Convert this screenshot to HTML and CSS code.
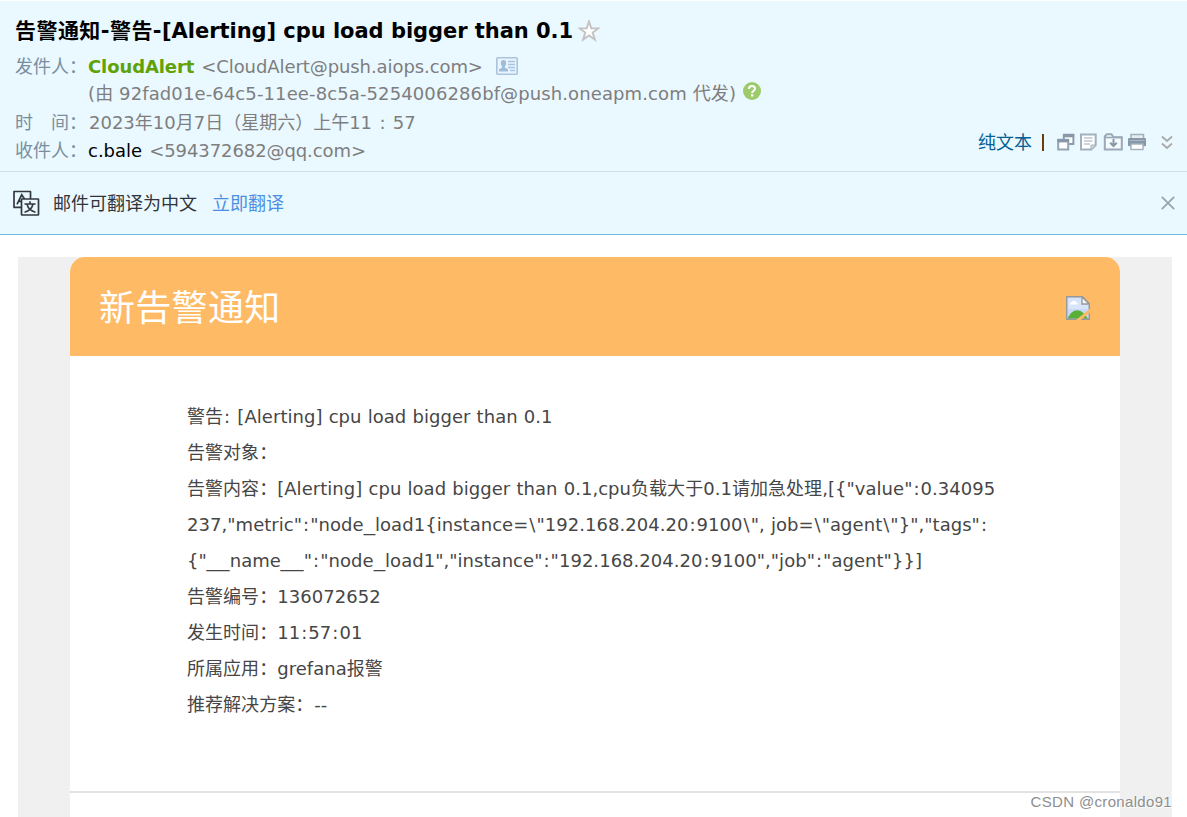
FILE: index.html
```html
<!DOCTYPE html>
<html lang="zh-CN">
<head>
    <meta charset="UTF-8">
    <meta name="viewport" content="width=device-width, initial-scale=1.0">
    <title>告警通知</title>
    <link rel="stylesheet" href="styles.css">
</head>
<body>
    <div class="mail-head">
        <div class="mail-info">
            <h1 class="subject">
                <span class="subject-text"><span class="subject-tag">告警通知-警告-</span>[Alerting] cpu load bigger than 0.1</span>
                <svg class="star" width="22" height="22" viewBox="0 0 22 22">
                    <path d="M11 1.5L13.3 8.4H20.3L14.7 12.6L16.9 19.6L11 15.4L5.1 19.6L7.3 12.6L1.7 8.4H8.7Z" fill="#fff" stroke="#c3c3c3" stroke-width="1.9"/>
                </svg>
            </h1>
            <div class="row row-from">
                <span class="label">发件人：</span>
                <b class="sender">CloudAlert</b>
                <span class="sender-mail">&lt;CloudAlert@push.aiops.com&gt;</span>
                <svg class="card-icon" width="22" height="18" viewBox="0 0 22 18">
                    <rect x=".8" y=".8" width="20.4" height="16.4" rx="1" fill="#eaf4fd" stroke="#a9c4de" stroke-width="1.6"/>
                    <path d="M7.5 3C9.4 3 10.3 4.3 10.1 6.2C10 7.7 9.5 8.7 8.9 9.3V10.8L12 12.3V14.5H3V12.3L6.1 10.8V9.3C5.4 8.7 5 7.7 4.9 6.2C4.7 4.3 5.6 3 7.5 3Z" fill="#9dbddb"/>
                    <path d="M12 4.5H19M12 7.5H19M12 10.5H19M14 13.5H19" stroke="#a9c4de" stroke-width="1.4"/>
                </svg>
            </div>
            <div class="row row-proxy">
                <span class="proxy">(由 92fad01e-64c5-11ee-8c5a-5254006286bf@push.oneapm.com 代发)</span>
                <svg class="help" width="18" height="18" viewBox="0 0 18 18">
                    <circle cx="9" cy="9" r="9" fill="#9ccb6c"/>
                    <path d="M5.9 7C5.9 4.9 7.2 4 9 4C10.9 4 12.1 5 12.1 6.6C12.1 8.7 9.2 8.8 9.2 11" fill="none" stroke="#fff" stroke-width="2.1"/>
                    <rect x="8" y="12.2" width="2.3" height="2.3" fill="#fff"/>
                </svg>
            </div>
            <div class="row row-time">
                <span class="label label-wide"><span>时</span><span>间：</span></span>
                <span class="time">2023年10月7日（星期六）上午11 : 57</span>
            </div>
            <div class="row row-to">
                <span class="label">收件人：</span>
                <span class="receiver">c.bale</span>
                <span class="receiver-mail">&lt;594372682@qq.com&gt;</span>
            </div>
        </div>
        <div class="tools">
            <a class="plain">纯文本</a>
            <span class="split"></span>
            <svg class="tool" width="18" height="18" viewBox="0 0 18 18">
                <rect x="6.8" y="1.8" width="9.6" height="9.2" fill="#fff" stroke="#8798a8" stroke-width="1.9"/>
                <path d="M6 2.6H17.2" stroke="#8798a8" stroke-width="3.4"/>
                <rect x="1.2" y="6.8" width="10" height="9.7" fill="#fff" stroke="#94a4b3" stroke-width="2"/>
                <path d="M.3 7.7H12.1" stroke="#8798a8" stroke-width="3.4"/>
            </svg>
            <svg class="tool" width="18" height="18" viewBox="0 0 18 18">
                <path d="M1 1.5H15.7V12L11.2 16.5H1Z" fill="#fff" stroke="#a3b0bd" stroke-width="2"/>
                <path d="M4 5H12.5M4 8H12.5M4 11H10" stroke="#bdc6ce" stroke-width="1.5"/>
                <path d="M11 16.5V12H16Z" fill="#d7dde2" stroke="#a3b0bd"/>
            </svg>
            <svg class="tool" width="20" height="18" viewBox="0 0 20 18">
                <path d="M1.8 16.5V3.5L3.8 1.3H8.5L10.5 4.2H18.8V16.5Z" fill="#f4fafd" stroke="#9aa9b7" stroke-width="2"/>
                <path d="M1.5 4.5H18.5" stroke="#9aa9b7" stroke-width="1.6"/>
                <path d="M10.5 6V13M7.2 9.7L10.5 13L13.8 9.7" fill="none" stroke="#8798a8" stroke-width="2"/>
            </svg>
            <svg class="tool" width="20" height="18" viewBox="0 0 20 18">
                <rect x="3" y="1.5" width="12.5" height="5" fill="#e6edf2" stroke="#a3b0bd" stroke-width="1.5"/>
                <rect x="0" y="5" width="18" height="8.3" rx="1.2" fill="#8798a8"/>
                <path d="M1.5 7.5H16.5" stroke="#aab7c2" stroke-width="1"/>
                <rect x="3" y="11" width="12" height="5.5" fill="#fff" stroke="#a3b0bd" stroke-width="1.4"/>
            </svg>
            <svg class="more" width="12" height="15" viewBox="0 0 12 15">
                <path d="M1 1.5L6 6L11 1.5M1 8.5L6 13L11 8.5" fill="none" stroke="#a9a9a9" stroke-width="1.8"/>
            </svg>
        </div>
    </div>

    <div class="translate">
        <svg class="translate-icon" width="28" height="27" viewBox="0 0 28 27">
            <path d="M9 17.3H2V1.5H18.5V9" fill="none" stroke="#34393e" stroke-width="1.7" stroke-linejoin="round"/>
            <path d="M5 14.3L9.7 4.8L12.5 9M6.8 11.3H9" fill="none" stroke="#34393e" stroke-width="1.7"/>
            <rect x="9.5" y="9" width="17" height="16" rx=".5" fill="#eaf8ff" stroke="#34393e" stroke-width="1.7"/>
            <path d="M18 11.2V13.7M12.5 14H23.6M15 14.2C16 18 18.5 20.9 23.5 22.2M21 14.2C20 18 17.5 20.9 12.5 22.2" fill="none" stroke="#34393e" stroke-width="1.6"/>
        </svg>
        <span class="translate-tip">邮件可翻译为中文</span>
        <a class="translate-link">立即翻译</a>
        <svg class="close" width="14" height="14" viewBox="0 0 14 14">
            <path d="M.8 .8L13.2 13.2M13.2 .8L.8 13.2" stroke="#98a4ae" stroke-width="1.8"/>
        </svg>
    </div>

    <div class="mail-body">
        <div class="notice">
            <div class="notice-head">
                <span class="notice-title">新告警通知</span>
                <svg class="broken" width="24" height="24" viewBox="0 0 24 24">
                    <path d="M.7 .7H16.5L23.3 7.5V23.3H.7Z" fill="#c8d9f5"/>
                    <path d="M2 2H15V9H22V13H2Z" fill="#d7e4fa"/>
                    <path d="M3.5 8.5C3.5 6.9 4.7 6.6 5.5 6.8C6 4 9.4 4 10 6.3C11.3 6.2 12 7.2 11.7 8.5Z" fill="#fff"/>
                    <path d="M1.5 22.7C4 17 7.5 14.3 11 14.3C15 14.3 18.7 17.5 22 22.7Z" fill="#58b038"/>
                    <path d="M.7 .7H16.5L23.3 7.5V23.3H.7Z" fill="none" stroke="#999" stroke-width="1.4"/>
                    <path d="M16 1V8H23Z" fill="#f7f8fa" stroke="#999" stroke-width="1.3"/>
                    <path d="M9.5 24.5H14L24.5 16V12Z" fill="#ffba66"/>
                </svg>
            </div>
            <div class="notice-content">
                <p>警告<i>:</i> [Alerting] cpu load bigger than 0.1</p>
                <p>告警对象：</p>
                <p>告警内容：[Alerting] cpu load bigger than 0.1,cpu负载大于0.1请加急处理,[{"value"<i>:</i>0.34095<br>237,"metric"<i>:</i>"node<u>_</u>load1{instance=<i>\</i>"192.168.204.20<i>:</i>9100<i>\</i>", job=<i>\</i>"agent<i>\</i>"}","tags"<i>:</i><br>{"<u class="two">__</u>name<u class="two">__</u>"<i>:</i>"node<u>_</u>load1","instance"<i>:</i>"192.168.204.20<i>:</i>9100","job"<i>:</i>"agent"}}]</p>
                <p>告警编号：136072652</p>
                <p>发生时间：11<i>:</i>57<i>:</i>01</p>
                <p>所属应用：grefana报警</p>
                <p>推荐解决方案：<i>--</i></p>
            </div>
        </div>
    </div>
    <div class="watermark">CSDN @cronaldo91</div>
</body>
</html>
```

FILE: styles.css
```css
body{
    margin: 0;
    height: 817px;
    overflow: hidden;
    display: flex;
    flex-direction: column;
    background-color: #fff;
    font-family: Verdana, "DejaVu Sans", "Noto Sans CJK SC", sans-serif;
    font-size: 18px;
    color: #464646;
    white-space: nowrap;
}

svg{
    display: block;
    flex: none;
}

.mail-head{
    box-sizing: border-box;
    height: 171px;
    margin-top: 1px;
    padding: 14px 14px 0 15px;
    display: flex;
    justify-content: space-between;
    background-color: #eaf8ff;
    border-bottom: 1px solid #cddfe8;
}

.subject{
    margin: 0;
    height: 32px;
    display: flex;
    align-items: center;
    font-size: 21px;
    line-height: 32px;
    letter-spacing: -.04px;
    color: #000;
}

.subject-tag{
    letter-spacing: .45px;
}

.star{
    margin: -1px 0 0 5px;
}

.row{
    height: 28px;
    display: flex;
    align-items: center;
    line-height: 28px;
    color: #7e7e7e;
}

.row-from{
    margin-top: 6px;
}

.row-proxy{
    height: 26px;
    padding-left: 73px;
}

.proxy{
    letter-spacing: .11px;
}

.row-time{
    height: 31px;
}

.time{
    margin-left: 1px;
    word-spacing: 1.6px;
}

.row-to{
    height: 26px;
}

.label{
    width: 73px;
    color: #798f9f;
}

.label-wide{
    display: flex;
    gap: 18px;
}

.sender{
    color: #5fa207;
    letter-spacing: -.1px;
}

.sender-mail,
.receiver-mail{
    margin-left: 7px;
    letter-spacing: -.08px;
}

.card-icon{
    margin: -2px 0 0 13px;
}

.help{
    margin: -6px 0 0 7px;
}

.receiver{
    color: #000;
}

.tools{
    height: 28px;
    margin-top: 113px;
    display: flex;
    align-items: center;
}

.plain{
    margin-top: -2px;
    color: #035f94;
}

.split{
    width: 2px;
    height: 17px;
    margin: 0 13px 0 10px;
    background-color: #6b3d09;
}

.tool{
    margin-right: 5px;
}

.more{
    margin-left: 8px;
}

.translate{
    box-sizing: border-box;
    height: 63px;
    padding: 0 12px 0 12px;
    display: flex;
    align-items: center;
    background-color: #eaf8ff;
    border-bottom: 1px solid #6dbce0;
}

.translate-tip{
    margin: -2px 0 0 13px;
    color: #31353a;
}

.translate-link{
    margin: -2px 0 0 15px;
    color: #4a90e2;
}

.close{
    margin-left: auto;
}

.mail-body{
    flex: 1;
    margin: 22px 15px 0 18px;
    padding: 0 52px;
    background-color: #f0f0f0;
}

.notice{
    height: 100%;
    background-color: #fff;
    border-radius: 15px 15px 0 0;
}

.notice-head{
    height: 99px;
    padding: 0 30px 0 29px;
    display: flex;
    align-items: center;
    justify-content: space-between;
    background-color: #ffba66;
    border-radius: 15px 15px 0 0;
}

.notice-title{
    margin-top: -3px;
    font-size: 36px;
    letter-spacing: .3px;
    color: #fff;
}

.broken{
    margin-top: 3px;
}

.notice-content{
    box-sizing: border-box;
    height: 437px;
    padding: 43px 117px 0;
    border-bottom: 2px solid #e3e3e3;
    line-height: 36px;
    letter-spacing: .04px;
    word-spacing: .4px;
}

.notice-content p{
    margin: 0;
}

.notice-content i{
    font-style: normal;
    padding: 0 1px;
}

/* wide underscores */
.notice-content u{
    display: inline-block;
    margin: 0 1.2px;
    text-decoration: none;
    transform: scaleX(1.27);
}

.notice-content .two{
    margin: 0 2.4px;
}

/* sits on top of the mail, bottom right corner */
.watermark{
    position: absolute;
    right: 15px;
    bottom: 6px;
    font-family: "Liberation Sans", Arial, sans-serif;
    font-size: 15px;
    line-height: 18px;
    letter-spacing: .33px;
    color: #8e8e8e;
    text-shadow: 1px 1px 0 #fff;
}
```
